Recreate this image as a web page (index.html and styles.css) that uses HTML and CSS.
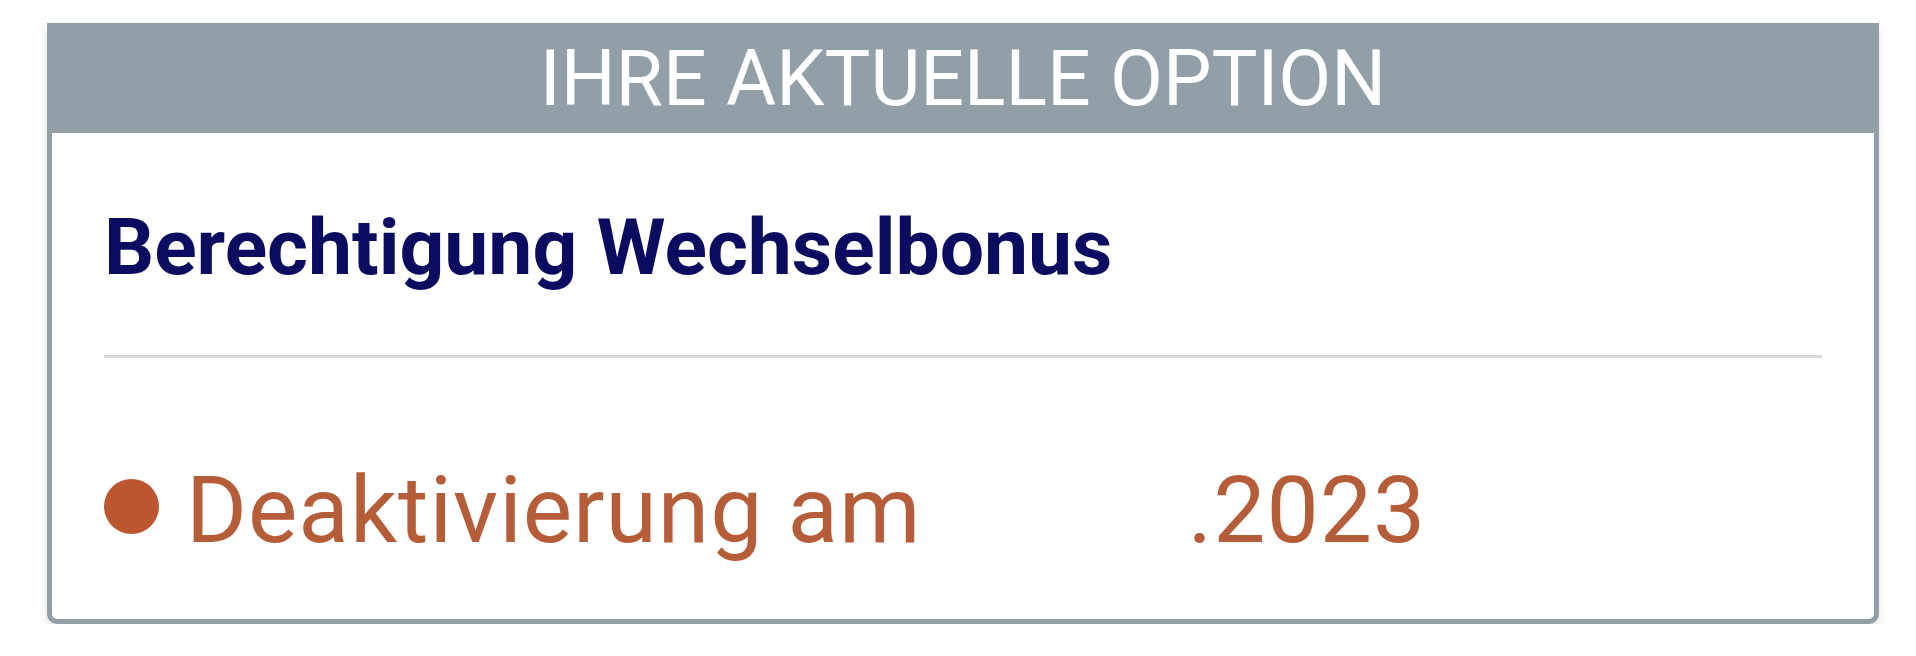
FILE: index.html
```html
<!DOCTYPE html>
<html lang="de">
<head>
  <meta charset="UTF-8">
  <meta name="viewport" content="width=device-width, initial-scale=1.0">
  <title>Ihre aktuelle Option</title>
  <link rel="stylesheet" href="styles.css">
</head>
<body>
  <div class="card">
    <div class="card-head">IHRE AKTUELLE OPTION</div>
    <div class="card-body">
      <h2 class="option-title">Berechtigung Wechselbonus</h2>
      <hr class="divider">
      <div class="status">
        <span class="dot"></span>
        <span class="status-text">Deaktivierung am <span class="blank"></span>.2023</span>
      </div>
    </div>
  </div>
</body>
</html>
```

FILE: styles.css
```css
body {
  margin: 0;
  background: #fff;
  font-family: Roboto, "Liberation Sans", Arial, sans-serif;
}
.card {
  margin: 23px 37px 0 47px;
  border: 5px solid #939fa7;
  border-top: none;
  border-radius: 0 0 10px 10px;
  background: #fff;
  box-shadow: 0 6px 10px rgba(0, 0, 0, 0.12);
}
.card-head {
  margin: 0 -5px;
  padding-top: 3px;
  line-height: 107px;
  background: #939fa7;
  color: #fff;
  text-align: center;
  font-size: 77px;
  font-weight: 400;
}
.card-body {
  padding: 67px 52px 52px;
}
.option-title {
  margin: 0;
  font-size: 78.6px;
  font-weight: 700;
  line-height: 1.2;
  color: #0b0b60;
}
.divider {
  margin: 61px 0 0;
  border: none;
  height: 3px;
  background: #d9dadc;
}
.status {
  display: flex;
  align-items: center;
  margin-top: 97px;
  color: #b55c38;
}
.dot {
  width: 55px;
  height: 55px;
  border-radius: 50%;
  background: #bb5631;
  margin-right: 27px;
  margin-bottom: 9px;
  flex-shrink: 0;
}
.status-text {
  font-size: 93px;
  letter-spacing: 1px;
  line-height: 1.2;
}
.blank {
  display: inline-block;
  width: 242px;
}
```
